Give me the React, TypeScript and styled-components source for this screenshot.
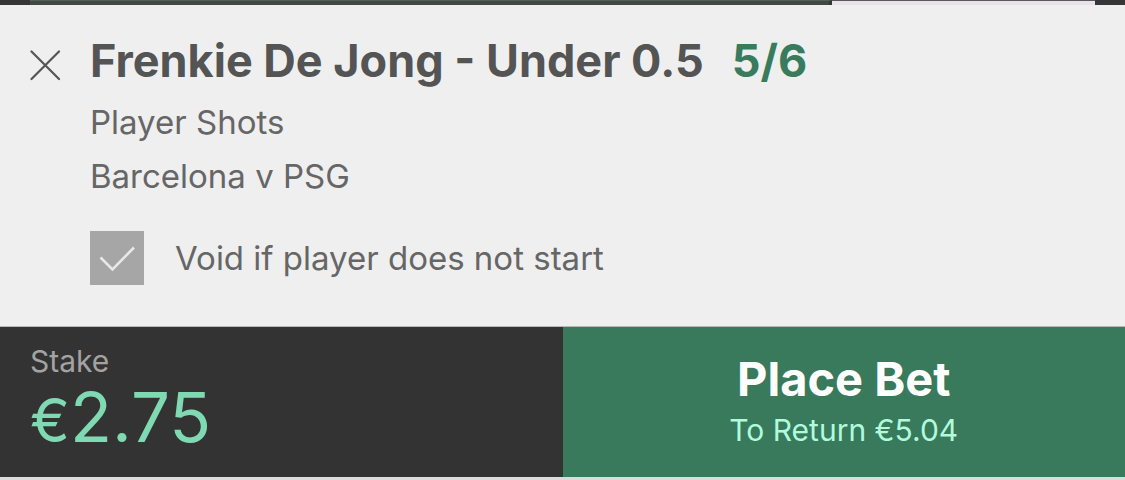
import React, { useState } from "react";
import styled, { createGlobalStyle } from "styled-components";

const GlobalStyle = createGlobalStyle`
  *, *::before, *::after { box-sizing: border-box; }
  body {
    margin: 0;
    background: #dcdcdc;
    font-family: Inter, "Liberation Sans", sans-serif;
  }
  h1, p { margin: 0; }
`;

const Backdrop = styled.div`
  display: flex;
  height: 5px;
  padding: 0 30px;
  background: #363636;
`;

const BackdropTrack = styled.div`
  flex: 799;
  background: #434844;
  border-top: 1px solid #51605a;
  border-right: 3px solid #363636;
`;

const BackdropCard = styled.div`
  flex: 263;
  background: #e7e3e7;
  border-top: 1px solid #5c595c;
`;

const Selection = styled.section`
  display: flex;
  align-items: flex-start;
  padding: 28px 30px 41px;
  background: #efefef;
`;

const RemoveButton = styled.button`
  display: flex;
  flex: none;
  width: 60px;
  padding: 16px 0 0;
  border: 0;
  background: none;
  color: #545454;
  cursor: pointer;
`;

const Details = styled.div`
  flex: 1;
  min-width: 0;
  color: #666;
`;

const Heading = styled.div`
  display: flex;
  align-items: baseline;
  gap: 28px;
  margin-bottom: 6px;
  font-size: 45px;
  font-weight: 700;
  line-height: 56px;
`;

const Title = styled.h1`
  color: #545454;
  font-size: inherit;
  font-weight: inherit;
`;

const Odds = styled.span`
  color: #387b5d;
`;

const Detail = styled.p`
  font-size: 33px;
  line-height: 54px;
`;

const Option = styled.label`
  display: flex;
  align-items: center;
  gap: 31px;
  margin-top: 28px;
  font-size: 33px;
  line-height: 54px;
`;

const CheckFrame = styled.span`
  display: grid;
  flex: none;
  width: 54px;
  height: 54px;

  > * { grid-area: 1 / 1; }
`;

const CheckInput = styled.input`
  appearance: none;
  width: 54px;
  height: 54px;
  margin: 0;
  background: #a6a6a6;
  cursor: pointer;

  &:not(:checked) + svg { visibility: hidden; }
`;

const CheckMark = styled.svg`
  pointer-events: none;
`;

const Footer = styled.footer`
  display: grid;
  grid-template-columns: 1fr 1fr;
  border-top: 1px solid #b5b9b7;
`;

const StakePanel = styled.div`
  min-width: 0;
  padding: 16px 30px 0;
  background: #333;
`;

const StakeLabel = styled.label`
  display: block;
  color: #a3a3a3;
  font-size: 30px;
  line-height: 36px;
`;

const StakeValue = styled.div`
  display: flex;
  align-items: baseline;
  color: #7fd9b3;
  font-size: 69px;
  line-height: 76px;
`;

const Currency = styled.span`
  font-size: 60px;
`;

const StakeInput = styled.input`
  flex: 1;
  min-width: 0;
  height: 76px;
  padding: 0;
  border: 0;
  outline: 0;
  background: none;
  color: inherit;
  font: inherit;
`;

const PlaceButton = styled.button`
  display: flex;
  flex-direction: column;
  align-items: center;
  padding: 23px 0 25px;
  border: 0;
  background: #39795c;
  font-family: inherit;
  cursor: pointer;
`;

const PlaceTitle = styled.span`
  color: #fff;
  font-size: 47px;
  font-weight: 700;
  line-height: 58px;
`;

const PlaceReturn = styled.span`
  color: #b0fbdc;
  font-size: 30px;
  line-height: 44px;
`;

export default function App() {
  const [voided, setVoided] = useState(true);
  const [stake, setStake] = useState("2.75");

  return (
    <>
      <GlobalStyle />
      <Backdrop>
        <BackdropTrack />
        <BackdropCard />
      </Backdrop>
      <main>
        <Selection>
          <RemoveButton type="button" aria-label="Remove selection">
            <svg width="31" height="32" viewBox="0 0 31 32" fill="none" stroke="currentColor" strokeWidth="2.2" strokeLinecap="round">
              <path d="M1.5 2.5 29 30M29 2.5 1.5 30" />
            </svg>
          </RemoveButton>
          <Details>
            <Heading>
              <Title>Frenkie De Jong - Under 0.5</Title>
              <Odds>5/6</Odds>
            </Heading>
            <Detail>Player Shots</Detail>
            <Detail>Barcelona v PSG</Detail>
            <Option>
              <CheckFrame>
                <CheckInput type="checkbox" checked={voided} onChange={(e) => setVoided(e.target.checked)} />
                <CheckMark width="54" height="54" viewBox="0 0 54 54" fill="none" stroke="#e8e8e8" strokeWidth="2.6" aria-hidden="true">
                  <path d="M10.5 26.5 22.5 38.5 44 16.5" />
                </CheckMark>
              </CheckFrame>
              Void if player does not start
            </Option>
          </Details>
        </Selection>
        <Footer>
          <StakePanel>
            <StakeLabel htmlFor="stake">Stake</StakeLabel>
            <StakeValue>
              <Currency>€</Currency>
              <StakeInput id="stake" inputMode="decimal" value={stake} onChange={(e) => setStake(e.target.value)} />
            </StakeValue>
          </StakePanel>
          <PlaceButton type="button">
            <PlaceTitle>Place Bet</PlaceTitle>
            <PlaceReturn>To Return €5.04</PlaceReturn>
          </PlaceButton>
        </Footer>
      </main>
    </>
  );
}
